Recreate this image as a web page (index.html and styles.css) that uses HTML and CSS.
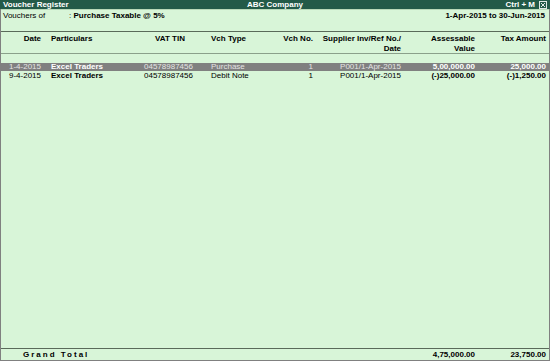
FILE: index.html
```html
<!DOCTYPE html>
<html lang="en">
<head>
    <meta charset="UTF-8">
    <meta name="viewport" content="width=device-width, initial-scale=1.0">
    <title>Voucher Register</title>
    <link rel="stylesheet" href="styles.css">
</head>
<body>
    <div class="screen">
        <!-- Title bar -->
        <div class="title-bar">
            <span class="title-left">Voucher Register</span>
            <span class="title-center">ABC Company</span>
            <span class="title-right">Ctrl + M <span class="close-box">
                <svg width="8" height="8" viewBox="0 0 8 8"><rect x="0.5" y="0.5" width="7" height="7" fill="none" stroke="#dfe8e4"/><path d="M2 2 L6 6 M6 2 L2 6" stroke="#dfe8e4" stroke-width="1"/></svg>
            </span></span>
        </div>

        <div class="report">
            <!-- Filter info -->
            <div class="info-row">
                <span class="info-label">Vouchers of</span>
                <span class="info-value">: <b>Purchase Taxable @ 5%</b></span>
                <span class="info-period">1-Apr-2015 to 30-Jun-2015</span>
            </div>

            <!-- Column headers -->
            <div class="grid header">
                <div class="c-date">Date</div>
                <div class="c-part">Particulars</div>
                <div class="c-tin head-tin">VAT TIN</div>
                <div class="c-type">Vch Type</div>
                <div class="c-no">Vch No.</div>
                <div class="c-ref">Supplier Inv/Ref No./<br>Date</div>
                <div class="c-amt">Assessable<br>Value</div>
                <div class="c-tax">Tax Amount</div>
            </div>

            <div class="rows">
                <div class="grid row selected">
                    <div class="c-date">1-4-2015</div>
                    <div class="c-part"><b>Excel Traders</b></div>
                    <div class="c-tin">04578987456</div>
                    <div class="c-type">Purchase</div>
                    <div class="c-no">1</div>
                    <div class="c-ref">P001/1-Apr-2015</div>
                    <div class="c-amt"><b>5,00,000.00</b></div>
                    <div class="c-tax"><b>25,000.00</b></div>
                </div>
                <div class="grid row">
                    <div class="c-date">9-4-2015</div>
                    <div class="c-part"><b>Excel Traders</b></div>
                    <div class="c-tin">04578987456</div>
                    <div class="c-type">Debit Note</div>
                    <div class="c-no">1</div>
                    <div class="c-ref">P001/1-Apr-2015</div>
                    <div class="c-amt"><b>(-)25,000.00</b></div>
                    <div class="c-tax"><b>(-)1,250.00</b></div>
                </div>
            </div>

            <!-- Totals -->
            <div class="grid total">
                <div class="total-label">Grand Total</div>
                <div class="c-amt">4,75,000.00</div>
                <div class="c-tax">23,750.00</div>
            </div>
        </div>
    </div>
</body>
</html>
```

FILE: styles.css
```css
/* Reset */
* {
    margin: 0;
    padding: 0;
    box-sizing: border-box;
}

/* Variables */
:root {
    --bg-color: #d8f5d8;
    --bar-color: #235a48;
    --line-color: #5a6a5a;
    --select-color: #808080;
    --text-color: #000;
}

html, body {
    width: 550px;
    height: 361px;
    overflow: hidden;
    background-color: var(--bg-color);
    font-family: 'Liberation Sans', Arial, sans-serif;
    font-size: 8px;
    color: var(--text-color);
}

.screen {
    height: 361px;
    display: flex;
    flex-direction: column;
}

/* Title bar */
.title-bar {
    height: 9px;
    background-color: var(--bar-color);
    color: #fff;
    font-weight: bold;
    line-height: 9px;
    display: flex;
    align-items: center;
    padding: 0 3px 0 3px;
    position: relative;
}

.title-center {
    position: absolute;
    left: 0;
    right: 0;
    text-align: center;
}

.title-right {
    margin-left: auto;
    display: flex;
    align-items: center;
    gap: 4px;
}

.close-box {
    display: flex;
    width: 8px;
    height: 8px;
}

/* Report body */
.report {
    flex: 1;
    display: flex;
    flex-direction: column;
    border-left: 1px solid #808080;
    border-right: 1px solid #808080;
    border-bottom: 1px solid #808080;
}

.info-row {
    display: flex;
    height: 22px;
    padding: 1px 4px 0 2px;
    line-height: 9px;
    border-top: 1px solid #b8d8b8;
}

.info-label {
    width: 66px;
}

.info-period {
    margin-left: auto;
    font-weight: bold;
}

/* Columns */
.grid {
    display: grid;
    grid-template-columns: 41px 98px 65px 75px 36px 88px 74px 70px;
}

.grid > div {
    white-space: nowrap;
}

.c-date { text-align: right; padding-right: 1px; }
.c-part { padding-left: 9px; }
.c-tin { padding-left: 4px; }
.c-type { padding-left: 6px; }
.c-no { text-align: right; padding-right: 3px; }
.c-ref { text-align: right; padding-right: 3px; }
.c-amt { text-align: right; padding-right: 3px; }
.c-tax { text-align: right; padding-right: 2px; }

.head-tin { padding-left: 15px; }

.header {
    border-top: 1px solid var(--line-color);
    border-bottom: 1px solid #8aa08a;
    font-weight: bold;
    line-height: 10px;
    padding: 2px 0 2px 0;
    height: 23px;
}

.rows {
    flex: 1;
    padding-top: 9px;
}

.row {
    height: 8px;
    line-height: 8px;
    margin-bottom: 1px;
}

.row.selected {
    background-color: var(--select-color);
    color: #e4e4e4;
}

.row.selected b {
    color: #fff;
}

.total {
    border-top: 1px solid var(--line-color);
    height: 12px;
    line-height: 11px;
    font-weight: bold;
}

.total-label {
    grid-column: 1 / 7;
    padding-left: 22px;
    letter-spacing: 2px;
}
```
